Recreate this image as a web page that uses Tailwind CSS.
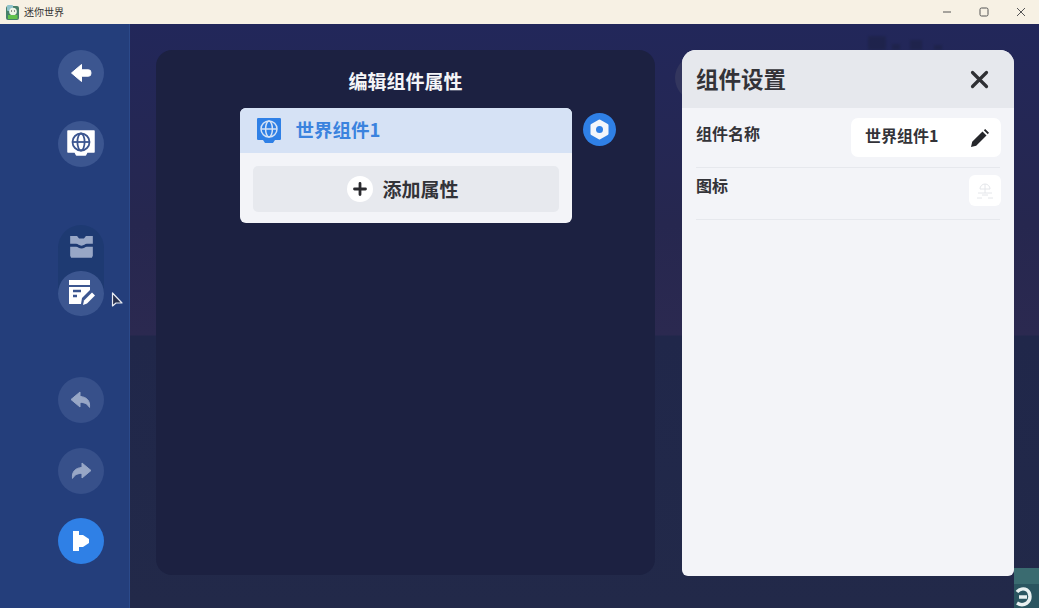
<!DOCTYPE html>
<html lang="zh-CN">
<head>
  <meta charset="UTF-8" />
  <title>迷你世界</title>
  <script src="https://cdn.jsdelivr.net/npm/@tailwindcss/browser@4"></script>
</head>
<body class="w-[1039px] h-[608px] overflow-hidden flex flex-col bg-[#23264c] font-['Noto_Sans_CJK_SC','Noto_Sans',sans-serif]">
  <!-- Title bar -->
  <header class="h-6 shrink-0 flex items-center bg-[#f7f1e4] text-[#333]">
    <svg class="ml-[6px] w-[13px] h-[15px]" viewBox="0 0 13 15">
      <rect y="1" width="13" height="14" rx="2" fill="#47806a" />
      <rect x="1" y="0" width="6" height="6" rx="1" fill="#8fc4cc" />
      <circle cx="7" cy="6.500" r="3.800" fill="#eef4e6" />
      <path d="M2 10h9.500v4H2z" fill="#62c24c" />
      <path d="M5 6h1M8 6h1" stroke="#333" />
    </svg>
    <span class="ml-[5px] text-[10px] leading-none">迷你世界</span>
    <div class="ml-auto flex items-center">
      <svg class="w-[10px] h-[10px] mr-[27px]" viewBox="0 0 10 10"><path d="M1 5h8" stroke="#555" fill="none" /></svg>
      <svg class="w-[10px] h-[10px] mr-[27px]" viewBox="0 0 10 10"><rect x="1" y="1" width="8" height="8" rx="1.500" stroke="#555" fill="none" /></svg>
      <svg class="w-[10px] h-[10px] mr-[13px]" viewBox="0 0 10 10"><path d="M1 1l8 8M9 1l-8 8" stroke="#555" fill="none" /></svg>
    </div>
  </header>

  <div class="flex-1 flex min-h-0">
    <!-- Left toolbar -->
    <aside class="relative w-[130px] shrink-0 bg-[#243e7b] flex flex-col items-center pt-[26px] pl-[33px] border-r border-[#2c4a8a]">
      <button class="w-[46px] h-[46px] rounded-full bg-[#3c5690] flex items-center justify-center">
        <svg class="w-6 h-6" viewBox="0 0 24 24"><path d="M12.500 3.500 2.500 12l10 8.500v-5.300h7a2.400 2.400 0 0 0 2.400-2.400v-1.600a2.400 2.400 0 0 0-2.400-2.400h-7z" fill="#fff" stroke="#fff" stroke-width="1" stroke-linejoin="round" /></svg>
      </button>
      <button class="mt-[25px] w-[46px] h-[46px] rounded-full bg-[#3c5690] flex items-center justify-center">
        <svg class="w-[30px] h-[30px]" viewBox="0 0 30 30">
          <path d="M2 2h26v21h-7l-1.500 3h-9L9 23H2z" fill="#fff" stroke="#fff" stroke-linejoin="round" stroke-width="1.500" />
          <g fill="none" stroke="#3c5690" stroke-width="1.800"><circle cx="15" cy="13" r="8.500" /><ellipse cx="15" cy="13" rx="3.600" ry="8.500" /><path d="M6.500 13h17" /></g>
        </svg>
      </button>
      <div class="mt-[58px] w-[46px] h-[91px] rounded-full bg-[#1e3a72] flex flex-col items-center">
        <svg class="mt-[10px] w-[25px] h-[24px]" viewBox="0 0 25 24" fill="#98a7c6"><path d="M1 1h7l2 2.500h5L17 1h7v8h-6c-2 0-3 1.800-5.500 1.800S9 9 7 9H1z" /><path d="M1 12h6c2 0 3 1.800 5.500 1.800S16 12 18 12h6v9l-1 2H2l-1-2z" /></svg>
        <button class="mt-[12px] w-[46px] h-[46px] rounded-full bg-[#3c5690] flex items-center justify-center">
          <svg class="w-[28px] h-[26px]" viewBox="0 0 28 26">
            <path d="M2 0h21v5H2zM2 7h21v3l-8 8-1 6H2z" fill="#fff" />
            <path d="M6 11h8M6 16h4" stroke="#3c5690" stroke-width="2.400" fill="none" />
            <path d="M16 25l1-4.500 8-8 3 3-8 8z" fill="#fff" />
          </svg>
        </button>
      </div>
      <button class="mt-[61px] w-[46px] h-[46px] rounded-full bg-[#37508a] flex items-center justify-center">
        <svg class="w-6 h-6" viewBox="0 0 24 24"><path d="M11 4 2 11.500 11 19v-4.600c4 0 7 .9 9.500 5 .8-6.400-2.500-10.400-9.500-11z" fill="#98a7c6" stroke="#98a7c6" stroke-linejoin="round" /></svg>
      </button>
      <button class="mt-[25px] w-[46px] h-[46px] rounded-full bg-[#37508a] flex items-center justify-center">
        <svg class="w-6 h-6" viewBox="0 0 24 24"><path d="M13 4l9 7.500-9 7.500v-4.600c-4 0-7 .9-9.500 5-.8-6.400 2.500-10.400 9.500-11z" fill="#98a7c6" stroke="#98a7c6" stroke-linejoin="round" /></svg>
      </button>
      <button class="mt-[24px] w-[46px] h-[46px] rounded-full bg-[#2f80e6] flex items-center justify-center">
        <svg class="w-6 h-6" viewBox="0 0 24 24"><path d="M4 2h6v4h4v4h6v4h-6v4h-4v4H4z" fill="#fff" /><path d="M14 6l6 4v4l-6 4z" fill="#fff" /></svg>
      </button>
      <!-- Mouse cursor -->
      <svg class="absolute left-[111px] top-[268px] w-[13px] h-[17px]" viewBox="0 0 13 17"><path d="M1.500 1v13l3.500-3h6z" fill="#27304f" stroke="#e8ebf2" stroke-width="1.200" stroke-linejoin="round" /></svg>
    </aside>

    <!-- Editor area -->
    <main class="relative flex-1 flex pt-[26px] pl-[26px] bg-[linear-gradient(to_bottom,#22275a_0,#26274f_200px,#2b2950_311px,#20274a_312px,#222949_584px)]">
      <section class="w-[499px] h-[525px] rounded-[16px] bg-[#1c2141] flex flex-col items-center">
        <h1 class="mt-[17px] text-[19px] leading-[28px] font-bold text-[#f4f5f8]">编辑组件属性</h1>
        <div class="mt-[13px] flex items-start w-[332px] relative">
          <div class="w-[332px] rounded-[6px] overflow-hidden bg-[#f3f4f8]">
            <div class="h-[45px] bg-[#d6e2f5] flex items-center pl-[16px]">
              <svg class="w-[26px] h-[27px]" viewBox="0 0 26 27">
                <path d="M2 1h22a1.500 1.500 0 0 1 1 1v20a1.500 1.500 0 0 1-1 1h-5l-2 3h-8l-2-3H2a1.500 1.500 0 0 1-1-1V2a1.500 1.500 0 0 1 1-1z" fill="#2f80e6" />
                <g fill="none" stroke="#d6e2f5" stroke-width="1.500"><circle cx="13" cy="12" r="8" /><ellipse cx="13" cy="12" rx="3.400" ry="8" /><path d="M5 12h16" /></g>
              </svg>
              <span class="ml-[14px] -mt-[2px] text-[18.500px] leading-none font-bold text-[#3b83de]">世界组件1</span>
            </div>
            <div class="p-[13px] pb-[11px]">
              <button class="w-full h-[46px] pr-[5px] rounded-[5px] bg-[#e7e9ee] flex items-center justify-center">
                <span class="w-[26px] h-[26px] rounded-full bg-white flex items-center justify-center">
                  <svg class="w-[14px] h-[14px]" viewBox="0 0 14 14"><path d="M7 1.500v11M1.500 7h11" stroke="#2a2a2e" stroke-width="2.800" stroke-linecap="round" /></svg>
                </span>
                <span class="ml-[9px] -mt-[1px] text-[19px] leading-none font-bold text-[#333338]">添加属性</span>
              </button>
            </div>
          </div>
          <span class="absolute left-[343px] top-[5px] w-[33px] h-[33px] rounded-full bg-[#2f80e6] flex items-center justify-center">
            <svg class="w-[23px] h-[23px]" viewBox="0 0 23 23"><path d="M11.500 3 19 7.300v8.400L11.500 20 4 15.700V7.300z" fill="#f3f6fb" stroke="#f3f6fb" stroke-linejoin="round" stroke-width="3" /><circle cx="11.500" cy="11.500" r="3.500" fill="#2f80e6" /></svg>
          </span>
        </div>
      </section>

      <!-- Blurred scene behind the drawer -->
      <span class="absolute left-[545px] top-[31px] w-[46px] h-[46px] rounded-full bg-[#33365e]"></span>
      <svg class="absolute left-[738px] top-[12px] w-[76px] h-[14px] blur-[1px] opacity-50" viewBox="0 0 76 14" fill="#1c2141"><rect x="0" y="0" width="18" height="14" rx="2" /><rect x="24" y="8" width="8" height="6" /><rect x="42" y="4" width="12" height="10" /><rect x="66" y="9" width="8" height="5" /></svg>

      <!-- Settings drawer -->
      <section class="absolute left-[552px] top-[26px] w-[332px] h-[526px] rounded-[14px] rounded-b-[6px] overflow-hidden bg-[#f3f4f8] text-[#333338]">
        <div class="h-[58px] bg-[#e6e8ed] flex items-center justify-between pl-[14px] pr-[25px]">
          <h2 class="-mt-[2px] text-[22.500px] leading-none font-bold">组件设置</h2>
          <svg class="w-[19px] h-[19px]" viewBox="0 0 19 19"><path d="M2.500 2.500l14 14M16.500 2.500l-14 14" stroke="#2f3034" stroke-width="3.200" stroke-linecap="round" /></svg>
        </div>
        <div class="mx-[14px] h-[60px] flex justify-between border-b border-[#e6e8ed]">
          <span class="mt-[15px] text-[16px] leading-[20px] font-bold">组件名称</span>
          <div class="mt-[10px] mr-[-1px] w-[150px] h-[39px] rounded-[7px] bg-white flex items-center justify-between pl-[14px] pr-[11px]">
            <span class="-mt-[5px] text-[16px] leading-none font-bold">世界组件1</span>
            <svg class="w-[20px] h-[20px]" viewBox="0 0 20 20"><path d="M1 19l1.200-5.200L12.500 3.500l4 4L6.200 17.800zM13.800 2.200l1.400-1.200 3.800 3.800-1.200 1.400z" fill="#26272b" /></svg>
          </div>
        </div>
        <div class="mx-[14px] h-[52px] flex justify-between border-b border-[#e6e8ed]">
          <span class="mt-[7px] text-[16px] leading-[20px] font-bold">图标</span>
          <div class="mt-[7px] mr-[-1px] w-[32px] h-[31px] rounded-[6px] bg-white flex items-center justify-center">
            <svg class="w-[20px] h-[20px]" viewBox="0 0 20 20"><g fill="none" stroke="#e4e6ea"><path d="M5 8a5 5 0 0 1 10 0z" /><path d="M10 3v9M3 12h14M2 17h5M13 17h5M7 14h6" /></g></svg>
          </div>
        </div>
      </section>

      <!-- Scene peeking out past the drawer -->
      <svg class="absolute right-0 bottom-0 w-[25px] h-[40px]" viewBox="0 0 25 40">
        <rect width="25" height="40" fill="#3a6b70" />
        <rect y="16" width="25" height="24" fill="#2b5560" />
        <path d="M3 24a8 8 0 0 1 10-2c4 3 4 10 0 13-3 2-7 2-10 0M5 29h8" fill="none" stroke="#e9f0f0" stroke-width="3.400" />
      </svg>
    </main>
  </div>
</body>
</html>
